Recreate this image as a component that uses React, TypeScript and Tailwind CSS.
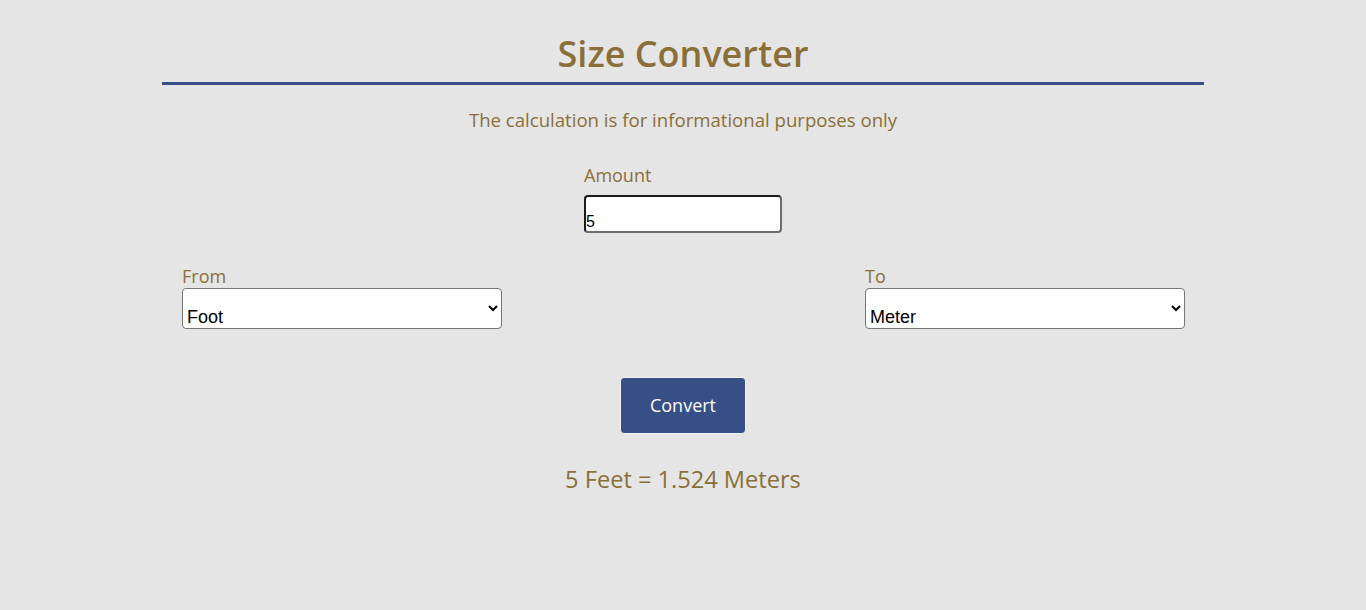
import React, { useState } from 'react';

const UNITS: Record<string, { plural: string; meters: number }> = {
  Foot: { plural: 'Feet', meters: 0.3048 },
  Meter: { plural: 'Meters', meters: 1 },
  Inch: { plural: 'Inches', meters: 0.0254 },
  Centimeter: { plural: 'Centimeters', meters: 0.01 },
  Yard: { plural: 'Yards', meters: 0.9144 },
};

export default function App() {
  const [amount, setAmount] = useState('5');
  const [from, setFrom] = useState('Foot');
  const [to, setTo] = useState('Meter');
  const [result, setResult] = useState('5 Feet = 1.524 Meters');

  const convert = () => {
    const n = parseFloat(amount) || 0;
    const value = +((n * UNITS[from].meters) / UNITS[to].meters).toFixed(4);
    setResult(`${n} ${UNITS[from].plural} = ${value} ${UNITS[to].plural}`);
  };

  return (
    <div className="min-h-screen bg-[#e5e5e5] font-['Open_Sans',sans-serif] text-[#8a6f38]">
      <div className="w-[1042px] mx-auto pt-[31px]">
        <h1 className="text-center text-[36px] font-semibold leading-[46px] pb-[5px] border-b-[3px] border-[#374e89]">
          Size Converter
        </h1>

        <p className="mt-[23px] text-center text-[18.6px] leading-[24px]">
          The calculation is for informational purposes only
        </p>

        {/* Amount */}
        <div className="w-[198px] mx-auto mt-[31px] flex flex-col">
          <label className="text-[18px] leading-[24px] mb-[8px]">Amount</label>
          <input
            value={amount}
            onChange={e => setAmount(e.target.value)}
            className="h-[38px] bg-white rounded-[4px] border-2 border-t-[#1b1b1b] border-l-[#1b1b1b] border-r-[#6e6e6e] border-b-[#6e6e6e] pt-[15px] px-0 text-[16px] text-black font-['Liberation_Sans',sans-serif] outline-none"
          />
        </div>

        {/* From / To */}
        <div className="flex justify-between pl-5 pr-[19px] mt-[31px]">
          <div className="flex flex-col w-[320px]">
            <label className="text-[18px] leading-[24px]">From</label>
            <select
              value={from}
              onChange={e => setFrom(e.target.value)}
              className="h-[41px] bg-white border border-[#767676] rounded-[4px] pt-[17px] pl-0 text-[18px] text-black font-['Liberation_Sans',sans-serif]"
            >
              {Object.keys(UNITS).map(u => <option key={u}>{u}</option>)}
            </select>
          </div>
          <div className="flex flex-col w-[320px]">
            <label className="text-[18px] leading-[24px]">To</label>
            <select
              value={to}
              onChange={e => setTo(e.target.value)}
              className="h-[41px] bg-white border border-[#767676] rounded-[4px] pt-[17px] pl-0 text-[18px] text-black font-['Liberation_Sans',sans-serif]"
            >
              {Object.keys(UNITS).map(u => <option key={u}>{u}</option>)}
            </select>
          </div>
        </div>

        <div className="flex justify-center mt-[48px]">
          <button
            onClick={convert}
            className="w-[126px] h-[57px] bg-[#374e87] text-white text-[18px] rounded-[4px] border border-[#f4f4f4]"
          >
            Convert
          </button>
        </div>

        <p className="text-center text-[23.6px] leading-[30px] mt-[30px]">{result}</p>
      </div>
    </div>
  );
}
